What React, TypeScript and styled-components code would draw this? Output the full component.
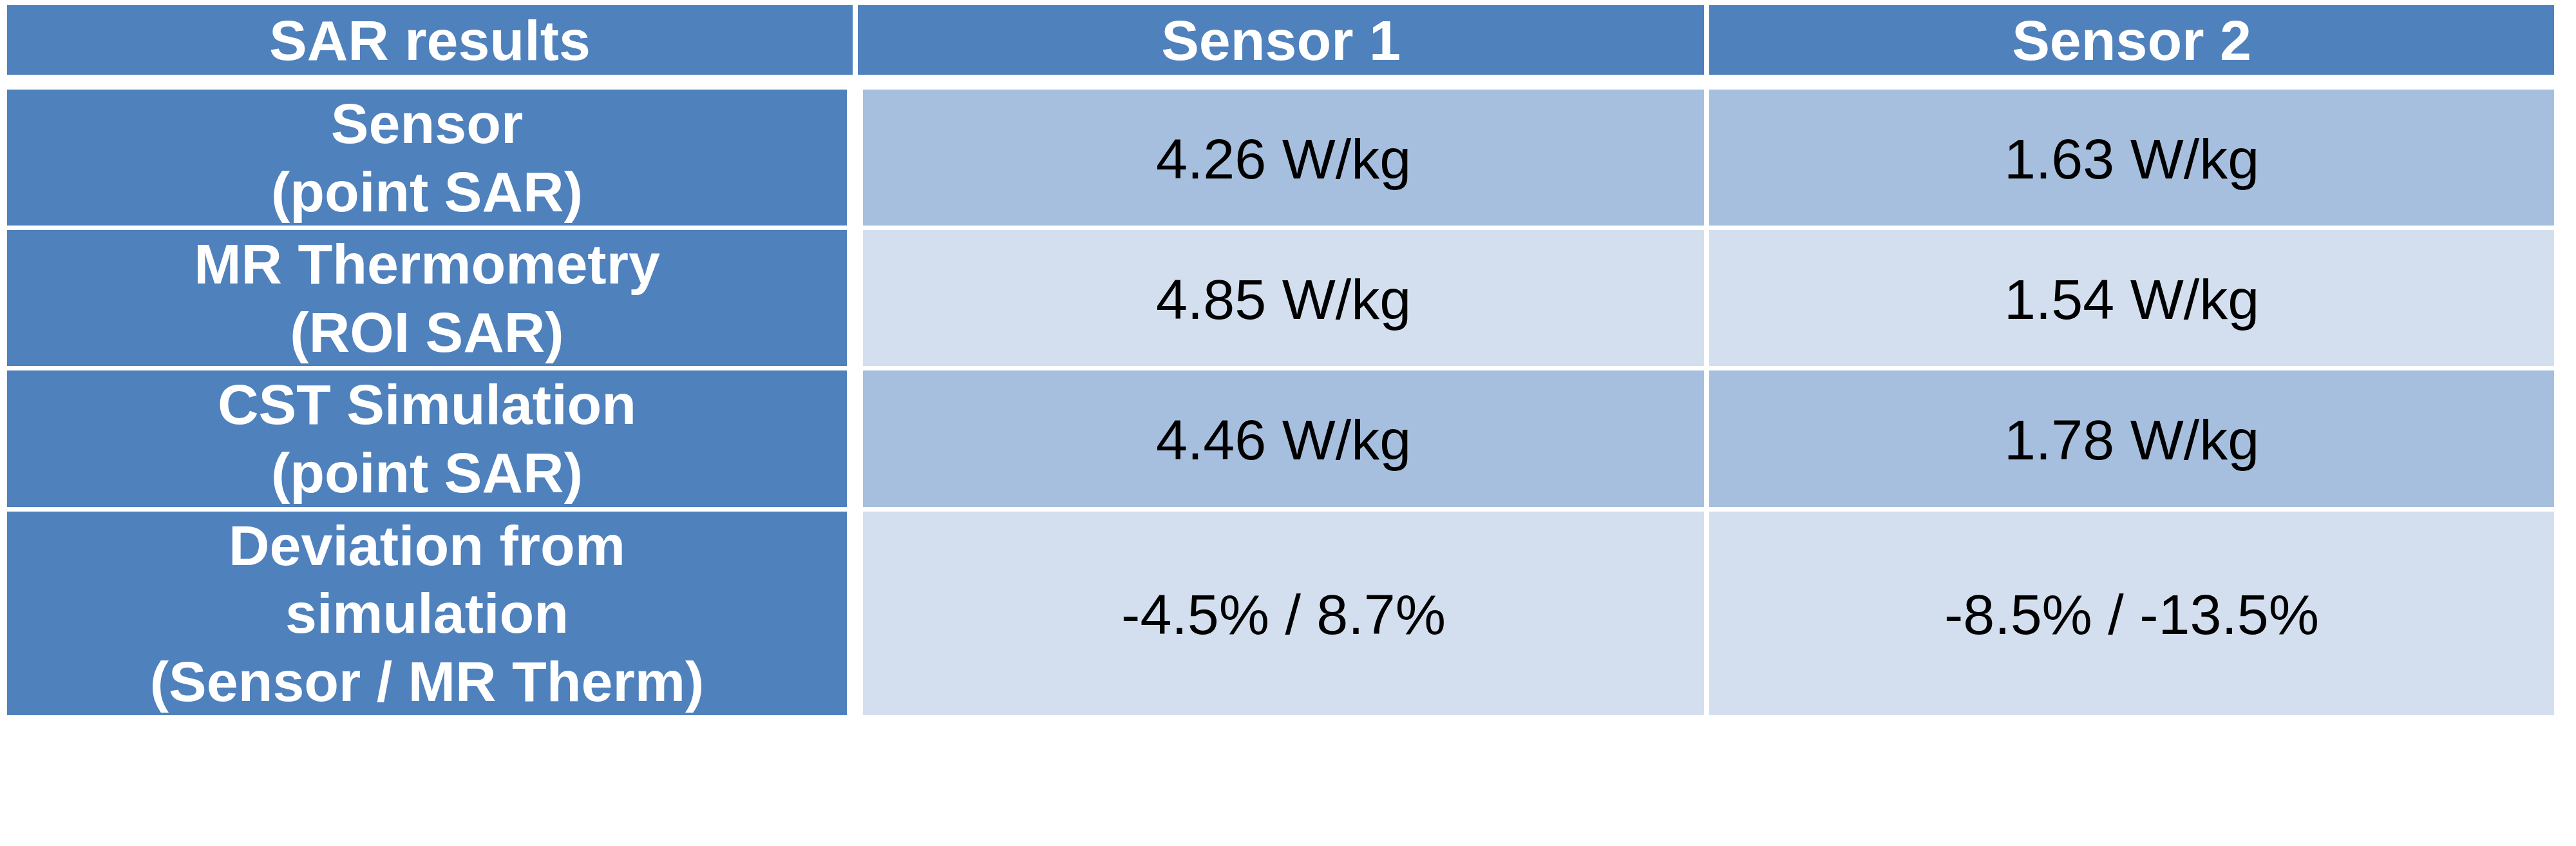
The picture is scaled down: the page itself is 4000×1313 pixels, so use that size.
import styled, { createGlobalStyle } from 'styled-components';

const rows = [
  { label: ['Sensor', '(point SAR)'], values: ['4.26 W/kg', '1.63 W/kg'] },
  { label: ['MR Thermometry', '(ROI SAR)'], values: ['4.85 W/kg', '1.54 W/kg'] },
  { label: ['CST Simulation', '(point SAR)'], values: ['4.46 W/kg', '1.78 W/kg'] },
  {
    label: ['Deviation from', 'simulation', '(Sensor / MR Therm)'],
    values: ['-4.5% / 8.7%', '-8.5% / -13.5%'],
  },
];

export default function App() {
  return (
    <>
      <GlobalStyle />
      <Page>
        <HeaderRow>
          <HeadCell>SAR results</HeadCell>
          <HeadCell>Sensor 1</HeadCell>
          <HeadCell>Sensor 2</HeadCell>
        </HeaderRow>
        <Body>
          {rows.map((row, i) => (
            <BodyRow key={i}>
              <LabelCell>
                {row.label.map((line) => (
                  <div key={line}>{line}</div>
                ))}
              </LabelCell>
              {row.values.map((v, j) => (
                <ValueCell key={j} $shade={i % 2 === 0 ? 'dark' : 'light'}>
                  {v}
                </ValueCell>
              ))}
            </BodyRow>
          ))}
        </Body>
      </Page>
    </>
  );
}

const GlobalStyle = createGlobalStyle`
  html, body {
    margin: 0;
    padding: 0;
    background: #ffffff;
  }
  body {
    font-family: "Liberation Sans", Arial, sans-serif;
  }
`;

const Page = styled.div`
  width: 3955px;
  padding: 8px 0 0 11px;
`;

const HeaderRow = styled.div`
  display: grid;
  grid-template-columns: 1313px 1314px 1312px;
  column-gap: 8px;
  height: 106px;
`;

const HeadCell = styled.div`
  background: #4f81bd;
  color: #ffffff;
  font-weight: bold;
  font-size: 88px;
  line-height: 1.2;
  display: flex;
  align-items: center;
  justify-content: center;
  text-align: center;
  padding-top: 2px;
`;

const Body = styled.div`
  margin-top: 25px;
  display: flex;
  flex-direction: column;
  gap: 7px;
`;

// the label track is wider than its cell: a 25px white gutter before Sensor 1
const BodyRow = styled.div`
  display: grid;
  grid-template-columns: 1321px 1306px 1312px;
  column-gap: 8px;
`;

const LabelCell = styled.div`
  width: 1304px;
  background: #4f81bd;
  color: #ffffff;
  font-weight: bold;
  font-size: 88px;
  line-height: 1.2;
  display: flex;
  flex-direction: column;
  align-items: center;
  justify-content: center;
  text-align: center;
`;

const ValueCell = styled.div<{ $shade: 'dark' | 'light' }>`
  background: ${(p) => (p.$shade === 'dark' ? '#a7bfde' : '#d3dfee')};
  color: #000000;
  font-size: 88px;
  line-height: 1.2;
  display: flex;
  align-items: center;
  justify-content: center;
  text-align: center;
  padding-top: 4px;
`;
